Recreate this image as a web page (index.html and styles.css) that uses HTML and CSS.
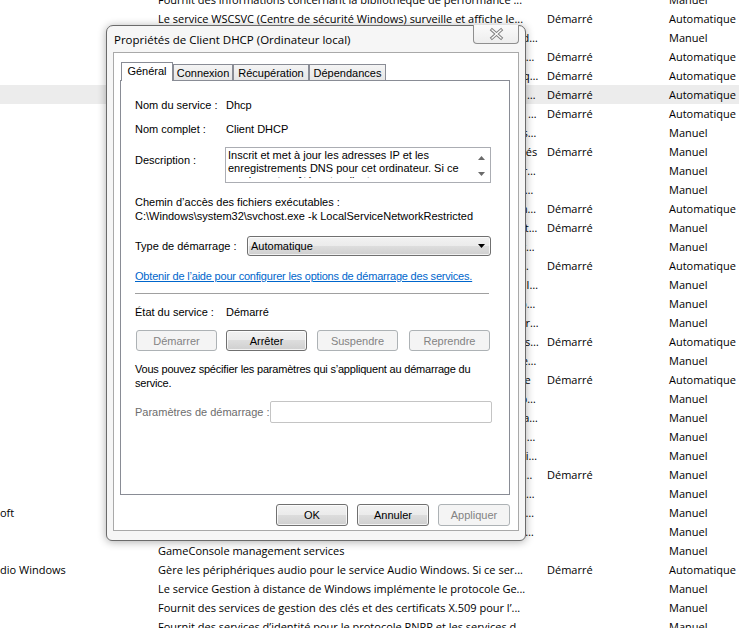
FILE: index.html
```html
<!DOCTYPE html>
<html lang="fr">
<head>
<meta charset="utf-8">
<title>Propriétés de Client DHCP</title>
<link rel="stylesheet" href="styles.css">
</head>
<body>
<div class="list">
  <div class="row"><span class="c-name"></span><span class="c-desc">Fournit des informations concernant la bibliothèque de performance ...</span><span class="c-stat"></span><span class="c-start">Manuel</span></div>
  <div class="row"><span class="c-name"></span><span class="c-desc">Le service WSCSVC (Centre de sécurité Windows) surveille et affiche le...</span><span class="c-stat">Démarré</span><span class="c-start">Automatique</span></div>
  <div class="row"><span class="c-name"></span><span class="c-desc">Permet la gestion des volumes de disque dynamiques et des partitions de stockage</span><span class="c-stat"></span><span class="c-start">Manuel</span></div>
  <div class="row"><span class="c-name"></span><span class="c-desc">Gère les communications entre les composants du système et les applications</span><span class="c-stat">Démarré</span><span class="c-start">Automatique</span></div>
  <div class="row"><span class="c-name"></span><span class="c-desc">Fournit la résolution des noms DNS et met en cache les résultats des requêtes</span><span class="c-stat">Démarré</span><span class="c-start">Automatique</span></div>
  <div class="row sel"><span class="c-name"></span><span class="c-desc">Inscrit et met à jour les adresses IP et les enregistrements DNS pour cet ordinateur</span><span class="c-stat">Démarré</span><span class="c-start">Automatique</span></div>
  <div class="row"><span class="c-name"></span><span class="c-desc">Le service de stratégie de diagnostic permet la détection des problèmes de composants</span><span class="c-stat">Démarré</span><span class="c-start">Automatique</span></div>
  <div class="row"><span class="c-name"></span><span class="c-desc">Coordonne les transactions qui couvrent plusieurs gestionnaires de ressources</span><span class="c-stat"></span><span class="c-start">Manuel</span></div>
  <div class="row"><span class="c-name"></span><span class="c-desc">Fournit des services de notification des événements système aux abonnés</span><span class="c-stat">Démarré</span><span class="c-start">Manuel</span></div>
  <div class="row"><span class="c-name"></span><span class="c-desc">Active la détection et la configuration des périphériques de découverte réseau</span><span class="c-stat"></span><span class="c-start">Manuel</span></div>
  <div class="row"><span class="c-name"></span><span class="c-desc">Permet aux applications de stocker et de récupérer des informations d'identification</span><span class="c-stat"></span><span class="c-start">Manuel</span></div>
  <div class="row"><span class="c-name"></span><span class="c-desc">Ce service gère les événements et les journaux d'événements du système d'exploitation</span><span class="c-stat">Démarré</span><span class="c-start">Automatique</span></div>
  <div class="row"><span class="c-name"></span><span class="c-desc">Gère la configuration et le suivi des périphériques Plug-and-Play connectés</span><span class="c-stat">Démarré</span><span class="c-start">Manuel</span></div>
  <div class="row"><span class="c-name"></span><span class="c-desc">Fournit la prise en charge des fonctionnalités de partage de fichiers du réseau</span><span class="c-stat"></span><span class="c-start">Manuel</span></div>
  <div class="row"><span class="c-name"></span><span class="c-desc">Charge les fichiers en mémoire pour améliorer les performances de démarrage</span><span class="c-stat">Démarré</span><span class="c-start">Automatique</span></div>
  <div class="row"><span class="c-name"></span><span class="c-desc">Active la prise en charge des cartes à puce lues par cet ordinateur et les lecteurs</span><span class="c-stat"></span><span class="c-start">Manuel</span></div>
  <div class="row"><span class="c-name"></span><span class="c-desc">Gère les connexions d'accès à distance et les réseaux privés virtuels depuis</span><span class="c-stat"></span><span class="c-start">Manuel</span></div>
  <div class="row"><span class="c-name"></span><span class="c-desc">Prend en charge les sessions de communication des homologues sur le réseau</span><span class="c-stat"></span><span class="c-start">Manuel</span></div>
  <div class="row"><span class="c-name"></span><span class="c-desc">Fournit la synchronisation de la date et de l'heure sur tous les clients et serveurs</span><span class="c-stat">Démarré</span><span class="c-start">Automatique</span></div>
  <div class="row"><span class="c-name"></span><span class="c-desc">Permet la découverte des périphériques UPnP sur le réseau domestique local</span><span class="c-stat"></span><span class="c-start">Manuel</span></div>
  <div class="row"><span class="c-name"></span><span class="c-desc">Fournit des services de profil utilisateur et charge les profils à l'ouverture</span><span class="c-stat">Démarré</span><span class="c-start">Automatique</span></div>
  <div class="row"><span class="c-name"></span><span class="c-desc">Gère l'accès aux périphériques d'image tels que les scanneurs et les appareils</span><span class="c-stat"></span><span class="c-start">Manuel</span></div>
  <div class="row"><span class="c-name"></span><span class="c-desc">Permet la configuration automatique des interfaces réseau sans fil et filaires</span><span class="c-stat"></span><span class="c-start">Manuel</span></div>
  <div class="row"><span class="c-name"></span><span class="c-desc">Fournit des fonctions de sauvegarde et de restauration des données du système</span><span class="c-stat"></span><span class="c-start">Manuel</span></div>
  <div class="row"><span class="c-name"></span><span class="c-desc">Optimise les performances des applications en mettant en cache les polices utilisées</span><span class="c-stat"></span><span class="c-start">Manuel</span></div>
  <div class="row"><span class="c-name"></span><span class="c-desc">Fournit l'infrastructure qui prend en charge la gestion de l'alimentation du système</span><span class="c-stat">Démarré</span><span class="c-start">Manuel</span></div>
  <div class="row"><span class="c-name"></span><span class="c-desc">Gère les clichés instantanés de volumes utilisés pour la sauvegarde et les autres</span><span class="c-stat"></span><span class="c-start">Manuel</span></div>
  <div class="row"><span class="c-name">oft</span><span class="c-desc">Permet la mise à jour des logiciels Microsoft installés sur cet ordinateur et ses</span><span class="c-stat"></span><span class="c-start">Manuel</span></div>
  <div class="row"><span class="c-name"></span><span class="c-desc">Fournit la prise en charge du protocole de résolution des noms d'homologues</span><span class="c-stat"></span><span class="c-start">Manuel</span></div>
  <div class="row"><span class="c-name"></span><span class="c-desc">GameConsole management services</span><span class="c-stat"></span><span class="c-start">Manuel</span></div>
  <div class="row"><span class="c-name">dio Windows</span><span class="c-desc">Gère les périphériques audio pour le service Audio Windows. Si ce ser...</span><span class="c-stat">Démarré</span><span class="c-start">Automatique</span></div>
  <div class="row"><span class="c-name"></span><span class="c-desc">Le service Gestion à distance de Windows implémente le protocole Ge...</span><span class="c-stat"></span><span class="c-start">Manuel</span></div>
  <div class="row"><span class="c-name"></span><span class="c-desc">Fournit des services de gestion des clés et des certificats X.509 pour l’...</span><span class="c-stat"></span><span class="c-start">Manuel</span></div>
  <div class="row"><span class="c-name"></span><span class="c-desc">Fournit des services d’identité pour le protocole PNRP et les services d...</span><span class="c-stat"></span><span class="c-start">Manuel</span></div>
</div>

<div class="dlg">
  <div class="title">Propriétés de Client DHCP (Ordinateur local)</div>
  <div class="close">
    <svg width="46" height="19" viewBox="0 0 46 19">
      <path d="M19 5 L28 13 M28 5 L19 13" stroke="#808080" stroke-width="3.2" stroke-linecap="square" fill="none"/>
      <path d="M19 5 L28 13 M28 5 L19 13" stroke="#fbfbfb" stroke-width="1.3" stroke-linecap="square" fill="none"/>
    </svg>
  </div>
  <div class="client">
    <div class="tabs">
      <div class="tab on">Général</div>
      <div class="tab t2">Connexion</div>
      <div class="tab t3">Récupération</div>
      <div class="tab t4">Dépendances</div>
    </div>
    <div class="panel">
      <div class="f-row"><span class="lbl">Nom du service :</span><span>Dhcp</span></div>
      <div class="f-row r2"><span class="lbl">Nom complet :</span><span>Client DHCP</span></div>
      <div class="desc-row">
        <span class="lbl-d">Description :</span>
        <div class="desc-box">
          <div class="desc-text">Inscrit et met à jour les adresses IP et les enregistrements DNS pour cet ordinateur. Si ce service est arrêté, cet ordinateur ne recevra pas d'adresses IP dynamiques ni de mises à jour DNS.</div>
          <div class="sb">
            <svg width="7" height="4" viewBox="0 0 7 4" class="sb-up"><path d="M0 4 L3.5 0 L7 4 Z" fill="#6a6a6a"/></svg>
            <svg width="7" height="4" viewBox="0 0 7 4" class="sb-dn"><path d="M0 0 L3.5 4 L7 0 Z" fill="#6a6a6a"/></svg>
          </div>
        </div>
      </div>
      <div class="path-lbl">Chemin d’accès des fichiers exécutables :</div>
      <div class="path">C:\Windows\system32\svchost.exe -k LocalServiceNetworkRestricted</div>
      <div class="type-row">
        <span class="lbl-t">Type de démarrage :</span>
        <div class="combo"><span>Automatique</span>
          <svg width="7" height="4" viewBox="0 0 7 4"><path d="M0 0 L7 0 L3.5 4 Z" fill="#000"/></svg>
        </div>
      </div>
      <a class="link" href="#">Obtenir de l’aide pour configurer les options de démarrage des services.</a>
      <div class="sep"></div>
      <div class="f-row etat"><span class="lbl">État du service :</span><span>Démarré</span></div>
      <div class="svc-btns">
        <div class="btn dis">Démarrer</div>
        <div class="btn">Arrêter</div>
        <div class="btn dis">Suspendre</div>
        <div class="btn dis">Reprendre</div>
      </div>
      <div class="note">Vous pouvez spécifier les paramètres qui s’appliquent au démarrage du<br>service.</div>
      <div class="param-row">
        <span class="lbl-p">Paramètres de démarrage :</span>
        <div class="input"></div>
      </div>
    </div>
    <div class="actions">
      <div class="btn act">OK</div>
      <div class="btn act">Annuler</div>
      <div class="btn act dis">Appliquer</div>
    </div>
  </div>
</div>
</body>
</html>
```

FILE: styles.css
```css
* { box-sizing: border-box; }
html, body { margin: 0; padding: 0; }
body {
  width: 739px;
  height: 628px;
  overflow: hidden;
  position: relative;
  background: #ffffff;
  font-family: "Open Sans", "Noto Sans", sans-serif;
  font-size: 11px;
  color: #000;
}

/* background services list */
.list { margin-top: -10px; }
.row {
  display: grid;
  grid-template-columns: 150px 389px 122px 78px;
  height: 19px;
  line-height: 19px;
  white-space: nowrap;
}
.row.sel { background: #ececec; }
.c-name { overflow: hidden; }
.c-desc, .c-stat, .c-start {
  padding-left: 8px;
  overflow: hidden;
  text-overflow: ellipsis;
}

/* dialog window */
.dlg {
  position: absolute;
  left: 106px;
  top: 25px;
  width: 420px;
  height: 516px;
  border: 1px solid #6b6b6b;
  border-radius: 7px 7px 6px 6px;
  background: #f6f6f6;
  box-shadow: 0 1px 9px rgba(0, 0, 0, 0.32);
  padding: 0 6px 9px 6px;
  display: flex;
  flex-direction: column;
}
.title {
  height: 26px;
  line-height: 27px;
  padding-left: 1px;
  font-family: "Open Sans", "Noto Sans", sans-serif;
  font-size: 11.5px;
  color: #000;
  white-space: nowrap;
}
.close {
  position: absolute;
  top: -1px;
  right: 6px;
  width: 46px;
  height: 19px;
  border: 1px solid #8f8f8f;
  border-top: none;
  border-radius: 0 0 4px 4px;
  background: linear-gradient(#fbfbfb, #ededed);
}
.close svg { display: block; position: absolute; left: -1px; top: 0; }

.client {
  flex: 1;
  border: 1px solid #a9a9a9;
  background: #ffffff;
  padding: 9px 8px 0 6px;
  font-family: "Liberation Sans", Arial, sans-serif;
  font-size: 11px;
}

/* tabs */
.tabs {
  display: flex;
  align-items: flex-end;
  height: 18px;
  position: relative;
  z-index: 2;
}
.tab {
  height: 16px;
  border: 1px solid #898c95;
  border-bottom: none;
  background: linear-gradient(#f4f4f4, #e6e6e6);
  text-align: center;
  line-height: 16px;
  white-space: nowrap;
}
.tab.on {
  height: 19px;
  margin-bottom: -1px;
  margin-left: 1px;
  width: 52px;
  background: #ffffff;
  line-height: 17px;
}
.tab.t2 { width: 60px; }
.tab.t3 { width: 76px; }
.tab.t4 { width: 77px; }

.panel {
  position: relative;
  z-index: 1;
  width: 390px;
  height: 415px;
  border: 1px solid #898c95;
  background: #ffffff;
  padding: 17px 17px 0 14px;
  line-height: 14px;
  display: flex;
  flex-direction: column;
  white-space: nowrap;
}
.f-row { display: flex; }
.lbl { width: 91px; flex: none; }
.r2 { margin-top: 10px; }

.desc-row { display: flex; margin-top: 11px; }
.lbl-d { width: 90px; flex: none; padding-top: 6px; }
.desc-box {
  width: 266px;
  height: 36px;
  border: 1px solid #abadb3;
  display: flex;
  align-items: flex-start;
}
.desc-text {
  flex: 1;
  margin-top: 1px;
  padding: 0 2px;
  height: 29px;
  line-height: 13px;
  white-space: normal;
  overflow: hidden;
}
.sb {
  width: 17px;
  height: 34px;
  flex: none;
  position: relative;
}
.sb svg { position: absolute; left: 5px; }
.sb-up { top: 8px; }
.sb-dn { top: 24px; }

.path-lbl { margin-top: 12px; }

.type-row { display: flex; align-items: center; margin-top: 13px; }
.lbl-t { width: 112px; flex: none; }
.combo {
  width: 244px;
  height: 20px;
  border: 1px solid #707070;
  border-radius: 3px;
  background: linear-gradient(#f2f2f2 0%, #ebebeb 50%, #dddddd 50%, #cfcfcf 100%);
  box-shadow: inset 0 0 0 1px rgba(255, 255, 255, 0.7);
  display: flex;
  align-items: center;
  justify-content: space-between;
  padding: 0 5px 0 3px;
}
.combo svg { display: block; }

.link {
  margin-top: 13px;
  color: #0066cc;
  text-decoration: underline;
  align-self: flex-start;
  letter-spacing: -0.2px;
}
.sep {
  margin-top: 10px;
  height: 1px;
  width: 354px;
  background: #a0a0a0;
}
.etat { margin-top: 11px; }

.svc-btns {
  display: flex;
  gap: 9px;
  margin-top: 11px;
  padding-left: 1px;
}
.svc-btns .btn { width: 81px; }
.svc-btns .btn:nth-child(3) { margin-left: 1px; }
.svc-btns .btn:nth-child(4) { margin-left: 2px; }

.btn {
  height: 21px;
  border: 1px solid #707070;
  border-radius: 3px;
  background: linear-gradient(#f2f2f2 0%, #ebebeb 50%, #dddddd 50%, #cfcfcf 100%);
  box-shadow: inset 0 0 0 1px rgba(255, 255, 255, 0.75);
  display: flex;
  align-items: center;
  justify-content: center;
  color: #000;
  font-family: "Liberation Sans", Arial, sans-serif;
  font-size: 11px;
}
.btn.dis {
  border-color: #adb2b5;
  background: #f4f4f4;
  box-shadow: none;
  color: #838383;
}

.note { margin-top: 11px; letter-spacing: -0.2px; }

.param-row { display: flex; align-items: center; margin-top: 11px; }
.lbl-p { width: 135px; flex: none; color: #6d6d6d; }
.input {
  width: 222px;
  height: 22px;
  border: 1px solid #c4c4c4;
  border-radius: 2px;
  background: #fff;
}

.actions {
  display: flex;
  justify-content: flex-end;
  gap: 9px;
  margin-top: 9px;
}
.actions .btn { width: 72px; height: 22px; }
```
